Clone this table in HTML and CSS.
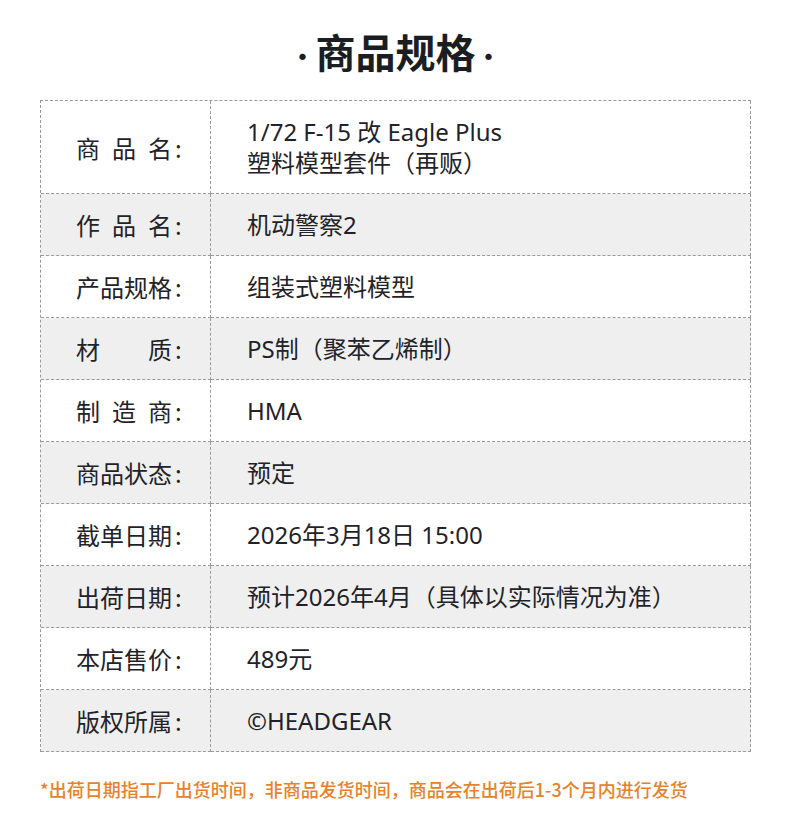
FILE: index.html
```html
<!DOCTYPE html>
<html lang="zh-CN">
<head>
<meta charset="utf-8">
<link rel="stylesheet" href="styles.css">
</head>
<body>
<div class="page">
  <h1 class="title"><span class="dot">·</span>商品规格<span class="dot">·</span></h1>
  <div class="spec">
    <div class="row">
      <div class="label"><span class="lt">商品名</span><span class="colon">:</span></div>
      <div class="value">1/72 F-15 改 Eagle Plus<br>塑料模型套件（再贩）</div>
    </div>
    <div class="row alt">
      <div class="label"><span class="lt">作品名</span><span class="colon">:</span></div>
      <div class="value">机动警察2</div>
    </div>
    <div class="row">
      <div class="label"><span class="lt">产品规格</span><span class="colon">:</span></div>
      <div class="value">组装式塑料模型</div>
    </div>
    <div class="row alt">
      <div class="label"><span class="lt">材质</span><span class="colon">:</span></div>
      <div class="value">PS制（聚苯乙烯制）</div>
    </div>
    <div class="row">
      <div class="label"><span class="lt">制造商</span><span class="colon">:</span></div>
      <div class="value">HMA</div>
    </div>
    <div class="row alt">
      <div class="label"><span class="lt">商品状态</span><span class="colon">:</span></div>
      <div class="value">预定</div>
    </div>
    <div class="row">
      <div class="label"><span class="lt">截单日期</span><span class="colon">:</span></div>
      <div class="value">2026年3月18日 15:00</div>
    </div>
    <div class="row alt">
      <div class="label"><span class="lt">出荷日期</span><span class="colon">:</span></div>
      <div class="value">预计2026年4月（具体以实际情况为准）</div>
    </div>
    <div class="row">
      <div class="label"><span class="lt">本店售价</span><span class="colon">:</span></div>
      <div class="value">489元</div>
    </div>
    <div class="row alt">
      <div class="label"><span class="lt">版权所属</span><span class="colon">:</span></div>
      <div class="value">©HEADGEAR</div>
    </div>
  </div>
  <p class="note">*出荷日期指工厂出货时间，非商品发货时间，商品会在出荷后1-3个月内进行发货</p>
</div>
</body>
</html>
```
FILE: styles.css
```css
html, body {
  margin: 0;
  padding: 0;
  background: #ffffff;
}
body {
  font-family: "Noto Sans CJK SC", "Noto Sans", sans-serif;
  color: #1f2329;
}
.page {
  width: 790px;
  padding: 0 39px 0 40px;
  box-sizing: border-box;
}
.title {
  margin: 0;
  padding: 26px 0 24px;
  height: 50px;
  font-size: 40px;
  line-height: 50px;
  font-weight: 700;
  text-align: center;
  color: #1a1e23;
}
.dot {
  font-weight: 400;
  font-size: 30px;
  line-height: 0;
  margin: 0 -2px;
}
.spec {
  border-top: 1px dashed #9a9a9a;
  border-left: 1px dashed #9a9a9a;
}
.row {
  display: grid;
  grid-template-columns: 170px 1fr;
}
.row.alt {
  background: #efefef;
}
.label, .value {
  border-right: 1px dashed #9a9a9a;
  border-bottom: 1px dashed #9a9a9a;
  padding: 15px 0;
  font-size: 24px;
  line-height: 31px;
  display: flex;
  align-items: center;
}
.label {
  padding-left: 35px;
  white-space: nowrap;
}
.lt {
  display: inline-block;
  width: 96px;
  text-align: justify;
  text-align-last: justify;
}
.colon {
  margin-left: 3px;
}
.value {
  padding-left: 36px;
  display: block;
  font-family: "Noto Sans", "Noto Sans CJK SC", sans-serif;
}
.note {
  margin: 25px 0 0;
  font-size: 18px;
  line-height: 24px;
  font-weight: 500;
  color: #e8822a;
}
```
